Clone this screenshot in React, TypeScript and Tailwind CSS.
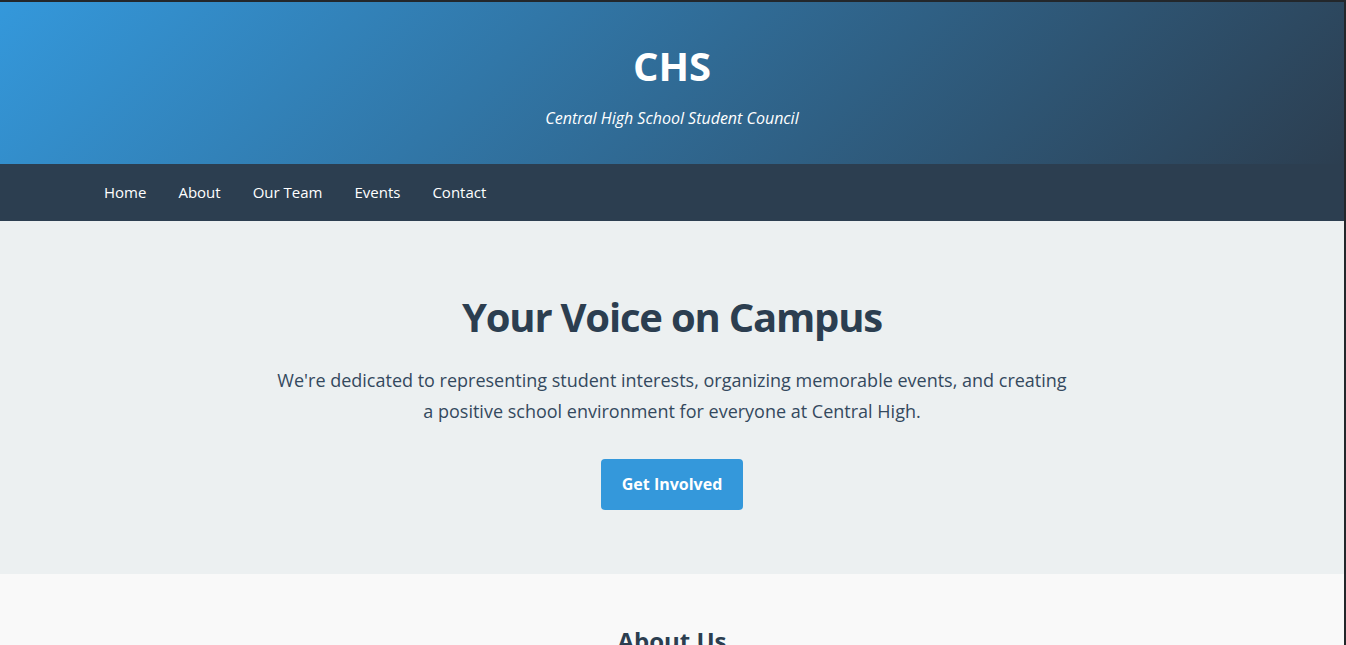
export default function App() {
  const navLinks = ["Home", "About", "Our Team", "Events", "Contact"];

  return (
    <div
      className="min-h-screen border-t-2 border-r-2 border-[#23272b] bg-[#f9f9f9] text-[#2c3e50] leading-[1.6]"
      style={{ fontFamily: '"Open Sans", "Noto Sans", sans-serif' }}
    >
      {/* Header */}
      <header className="bg-[linear-gradient(135deg,#3498db,#2c3e50)] py-8 text-center text-white">
        <h1 className="text-[40px] font-bold leading-[64px]">CHS</h1>
        <p className="mt-2 text-[16px] italic leading-[25.6px]">
          Central High School Student Council
        </p>
      </header>

      {/* Nav */}
      <nav className="bg-[#2c3e50]">
        <div className="mx-auto flex max-w-[1200px] gap-8 px-8 py-4">
          {navLinks.map((link) => (
            <a
              key={link}
              href="#"
              className="text-[15px] leading-[25.6px] text-white hover:text-[#3498db]"
            >
              {link}
            </a>
          ))}
        </div>
      </nav>

      {/* Hero */}
      <section className="bg-[#ecf0f1] py-16 text-center">
        <h2 className="text-[40px] font-bold leading-[64px] tracking-[-0.03em] text-[#2c3e50]">
          Your Voice on Campus
        </h2>
        <p className="mx-auto mt-4 max-w-[800px] text-[18px] leading-[31px] text-[#34495e]">
          We're dedicated to representing student interests, organizing
          memorable events, and creating a positive school environment for
          everyone at Central High.
        </p>
        <button className="mt-8 rounded-[4px] bg-[#3498db] px-[21px] py-[12.8px] text-[16px] font-bold leading-[25.6px] text-white">
          Get Involved
        </button>
      </section>

      {/* About */}
      <section className="bg-[#f9f9f9] pt-12 pb-16 text-center">
        <h2 className="text-[24px] font-bold leading-[38px] text-[#2c3e50]">
          About Us
        </h2>
      </section>
    </div>
  );
}
